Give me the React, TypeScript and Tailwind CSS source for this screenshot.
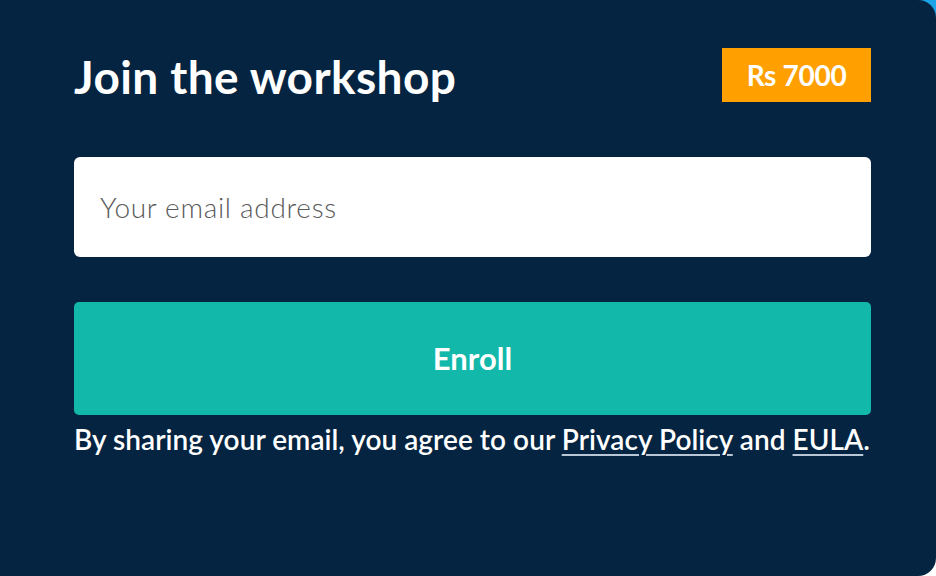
export default function App() {
  return (
    <div className="w-[936px] h-[576px] bg-[linear-gradient(to_bottom,#1ba3e8_50%,#ffffff_50%)]">
      <div
        className="w-[936px] h-[576px] bg-[#042441] rounded-r-[18px] pl-[74px] pr-[65px] pt-[48px]"
        style={{ fontFamily: 'Lato, "Open Sans", sans-serif' }}
      >
        <div className="flex items-center justify-between">
          <h1 className="text-white text-[46px] font-bold leading-none tracking-[0.4px] pt-[3px]">
            Join the workshop
          </h1>
          <span className="bg-[#ffa000] text-white font-bold text-[28px] leading-none w-[149px] h-[54px] flex items-center justify-center tracking-[-0.3px]">
            Rs 7000
          </span>
        </div>

        <input
          type="email"
          placeholder="Your email address"
          className="mt-[55px] w-full h-[100px] bg-white rounded-[6px] px-[26px] text-[28px] font-light tracking-[0.7px] text-gray-700 placeholder:text-[#5a5a5a] outline-none"
        />

        <button className="mt-[45px] w-full h-[113px] bg-[#12b8a9] rounded-[5px] text-white font-bold text-[31px]">
          Enroll
        </button>

        <p className="mt-[7px] text-white text-[28px] font-semibold leading-tight whitespace-nowrap tracking-[0.05px]">
          By sharing your email, you agree to our{' '}
          <a href="#" className="underline underline-offset-4 decoration-2 decoration-[#b9c6d6]">Privacy Policy</a> and{' '}
          <a href="#" className="underline underline-offset-4 decoration-2 decoration-[#b9c6d6]">EULA</a>.
        </p>
      </div>
    </div>
  );
}
